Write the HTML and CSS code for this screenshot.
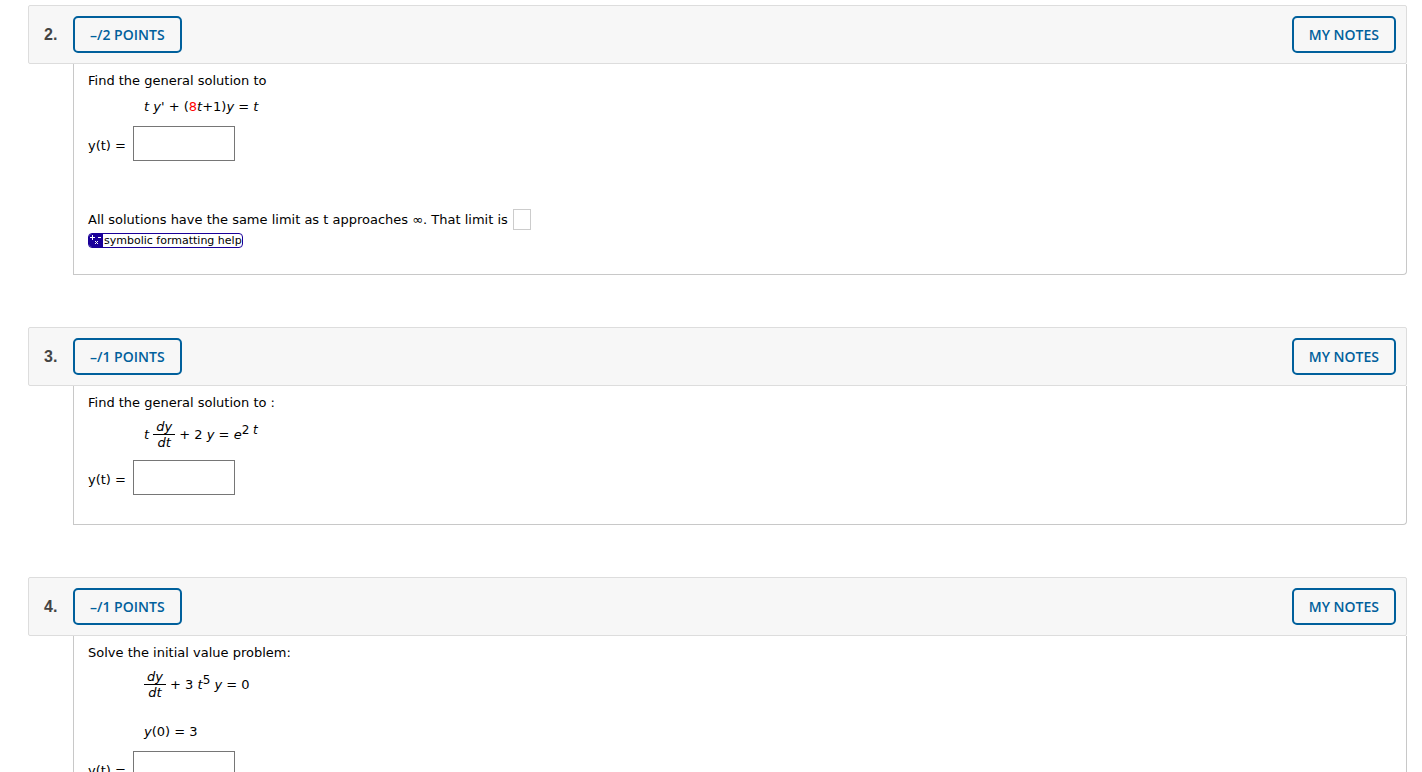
FILE: index.html
```html
<!DOCTYPE html>
<html lang="en">
<head>
	<meta charset="UTF-8">
	<meta name="viewport" content="width=device-width, initial-scale=1">
	<title>Differential Equations Homework</title>
	<link rel="stylesheet" href="styles.css">
</head>
<body>

<main class="assignment">

	<section class="question">
		<div class="questionHead">
			<h2 class="number">2.</h2>
			<button type="button" class="btn">–/2 POINTS</button>
			<button type="button" class="btn notes">MY NOTES</button>
		</div>
		<div class="questionBody">
			<p>Find the general solution to</p>
			<p class="equation"><i>t y'</i> + (<span class="random">8</span><i>t</i>+1)<i>y</i> = <i>t</i></p>
			<div class="answer">
				<label for="q2a" class="answerLabel">y(t) =</label>
				<input type="text" id="q2a" class="answerBox">
			</div>
			<div class="answer limit">
				<label for="q2b">All solutions have the same limit as t approaches <span class="infinity">∞</span>. That limit is</label>
				<input type="text" id="q2b" class="smallBox">
			</div>
			<a href="#" class="help">
				<svg class="helpIcon" width="14" height="13" viewBox="0 0 14 13" shape-rendering="crispEdges" aria-hidden="true">
					<path fill="#fff" d="M1 3h5v1H1zM3 1h1v5H3zM9 3h3v1H9zM6 7h1v1H6zM8 7h1v1H8zM7 8h1v1H7zM6 9h1v1H6zM8 9h1v1H8z"/>
				</svg>
				<span class="helpText">symbolic formatting help</span>
			</a>
		</div>
	</section>

	<section class="question">
		<div class="questionHead">
			<h2 class="number">3.</h2>
			<button type="button" class="btn">–/1 POINTS</button>
			<button type="button" class="btn notes">MY NOTES</button>
		</div>
		<div class="questionBody">
			<p>Find the general solution to :</p>
			<p class="equation"><i>t</i> <span class="fraction"><i class="top">dy</i><i>dt</i></span> + 2 <i>y</i> = <i>e</i><sup>2 <i>t</i></sup></p>
			<div class="answer">
				<label for="q3a" class="answerLabel">y(t) =</label>
				<input type="text" id="q3a" class="answerBox">
			</div>
		</div>
	</section>

	<section class="question">
		<div class="questionHead">
			<h2 class="number">4.</h2>
			<button type="button" class="btn">–/1 POINTS</button>
			<button type="button" class="btn notes">MY NOTES</button>
		</div>
		<div class="questionBody">
			<p>Solve the initial value problem:</p>
			<p class="equation"><span class="fraction"><i class="top">dy</i><i>dt</i></span> + 3 <i>t</i><sup>5</sup> <i>y</i> = 0</p>
			<p class="equation initial"><i>y</i>(0) = 3</p>
			<div class="answer">
				<label for="q4a" class="answerLabel">y(t) =</label>
				<input type="text" id="q4a" class="answerBox">
			</div>
		</div>
	</section>

</main>

</body>
</html>
```
FILE: styles.css
```css
* {
	box-sizing: border-box;
}
body {
	margin: 0;
	background: #fff;
	color: #000;
	font-family: Verdana, "DejaVu Sans", sans-serif;
	font-size: 13px;
	line-height: 20px;
}
p {
	margin: 0;
}
.assignment {
	padding: 5px 15px 0 28px;
}
.question {
	margin-bottom: 52px;
}

/* grey bar */
.questionHead {
	display: flex;
	align-items: center;
	padding: 10px;
	background: #f7f7f7;
	border: 1px solid #ddd;
	border-radius: 2px;
}
.number {
	width: 34px;
	margin: 0;
	padding-left: 5px;
	color: #444;
	font: bold 16px/20px "Liberation Sans", Arial, sans-serif;
}
.btn {
	height: 37px;
	padding: 0 15px;
	background: transparent;
	border: 2px solid #00609c;
	border-radius: 5px;
	color: #00609c;
	font: 600 14px/20px "Open Sans", sans-serif;
	cursor: pointer;
}
.notes {
	margin-left: auto;
}

.questionBody {
	margin-left: 45px;
	padding: 7px 14px 26px;
	border: 1px solid #c8c8c8;
	border-top: 0;
	border-radius: 0 0 4px 0;
}
.equation {
	margin: 6px 0 0 56px;
}
.initial {
	margin-top: 21px;
}
.random {
	color: #f00;
}
.fraction {
	display: inline-flex;
	flex-direction: column;
	vertical-align: middle;
	line-height: 16px;
	text-align: center;
}
.top {
	padding: 0 3px;
	border-bottom: 1px solid #000;
	line-height: 15px;
}
sup {
	font-size: 12px;
	line-height: 0;
	vertical-align: 5px;
}

.answer {
	display: flex;
	align-items: center;
	gap: 5px;
	margin-top: 9px;
}
.answer:last-child {
	margin-bottom: 3px;
}
.answerLabel {
	padding: 4px 2px 0 0;
}
.answerBox {
	width: 102px;
	height: 35px;
	border: 1px solid #767676;
}
.limit {
	margin-top: 48px;
}
.smallBox {
	width: 18px;
	height: 21px;
	padding: 0;
	border: 1px solid #ccc;
}

.help {
	display: flex;
	width: fit-content;
	margin-top: 3px;
	border: 1px solid #1a0099;
	border-radius: 4px;
	color: #000;
	font: 11px/13px "DejaVu Sans", sans-serif;
	text-decoration: none;
	overflow: hidden;
}
.helpIcon {
	background: #1a0099;
}
.helpText {
	padding-left: 1px;
}
```
